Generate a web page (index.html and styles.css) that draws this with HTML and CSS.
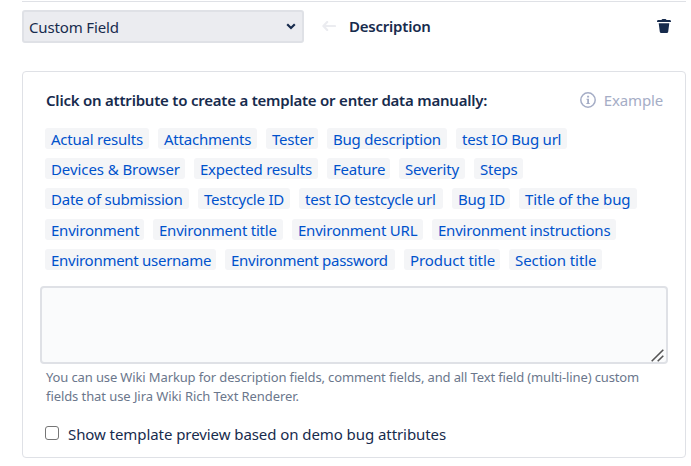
FILE: index.html
```html
<!DOCTYPE html>
<html lang="en">
<head>
<meta charset="utf-8">
<title>Custom field mapping</title>
<link rel="stylesheet" href="styles.css">
</head>
<body>
<main class="mapping">
  <header class="mapping-head">
    <div class="select"><span>Custom Field</span>
      <svg class="chevron" width="10" height="7" viewBox="0 0 10 7"><path d="M1.2 1.3 5 5 8.8 1.3" fill="none" stroke="#172b4d" stroke-width="2.2"/></svg>
    </div>
    <svg class="arrow" width="14" height="10" viewBox="0 0 14 10"><path d="M5.2 1 1.4 5l3.8 4M1.6 5H13" fill="none" stroke="#ebecf0" stroke-width="2.2" stroke-linecap="round" stroke-linejoin="round"/></svg>
    <strong class="field-name">Description</strong>
    <svg class="trash" width="14" height="14" viewBox="0 0 14 14"><path d="M0 2.4Q0 1 1.4 1H4.5Q4.8 0 5.8 0H8.2Q9.2 0 9.5 1h3.1Q14 1 14 2.4V3H0ZM1.7 4.2H12.3L11.2 12.8Q11 14 9.8 14H4.2Q3 14 2.8 12.8Z" fill="#172b4d"/></svg>
  </header>
  <section class="panel">
    <div class="panel-head">
      <strong class="prompt">Click on attribute to create a template or enter data manually:</strong>
      <span class="example"><svg width="16" height="16" viewBox="0 0 16 16"><circle cx="8" cy="8" r="7.2" fill="none" stroke="#a5adc6" stroke-width="1.5"/><path d="M7.1 3.8h2v1.8h-2zM6.5 6.7h2.5v4.2h.7v1.2H6.4v-1.2h.8V7.8h-.7z" fill="#a5adc6"/></svg><span class="example-text">Example</span></span>
    </div>
    <div class="chips">
      <div class="row row-1"><a>Actual results</a><a>Attachments</a><a>Tester</a><a>Bug description</a><a>test IO Bug url</a></div>
      <div class="row row-2"><a class="wide">Devices &amp; Browser</a><a>Expected results</a><a>Feature</a><a>Severity</a><a>Steps</a></div>
      <div class="row row-3"><a>Date of submission</a><a>Testcycle ID</a><a>test IO testcycle url</a><a>Bug ID</a><a class="wide">Title of the bug</a></div>
      <div class="row row-4"><a>Environment</a><a>Environment title</a><a>Environment URL</a><a>Environment instructions</a></div>
      <div class="row row-5"><a class="narrow">Environment username</a><a class="narrow">Environment password</a><a class="wide">Product title</a><a class="wide">Section title</a></div>
    </div>
    <div class="editor">
      <textarea class="template" aria-label="Template"></textarea>
      <svg class="grip" width="13" height="13" viewBox="0 0 13 13"><path d="M.7 12.3 12.3.7M6.7 12.3l5.6-5.6" stroke="#555" stroke-width="1.6"/></svg>
    </div>
    <p class="hint"><span class="hint-a">You can use Wiki Markup for description fields, comment fields, and all Text field (multi-line) custom</span><br><span class="hint-b">fields that use Jira Wiki Rich Text Renderer.</span></p>
    <label class="preview"><input type="checkbox"><span>Show template preview based on demo bug attributes</span></label>
  </section>
</main>
</body>
</html>
```
FILE: styles.css
```css
* { box-sizing: border-box; }
body { margin: 0; background: #fff; color: #172b4d; font: 15px/22px "Noto Sans", "Open Sans", sans-serif; }
.mapping { width: 664px; height: 459px; margin-left: 22px; padding-top: 1px; }
.mapping-head { display: flex; align-items: center; height: 50px; border-top: 1px solid #dfe1e6; }
.select { display: flex; align-items: center; justify-content: space-between; width: 282px; height: 33px; padding: 0 6px 0 5px; border: 2px solid #dfe1e6; border-radius: 3px; background: #ebecf0; letter-spacing: -.15px; }
.arrow { margin: -1px 0 0 18px; }
strong { font-weight: 600; letter-spacing: -.22px; }
.field-name { margin: -1px 0 0 13px; }
.trash { margin: -1px 15.5px 0 auto; }
.panel { height: 387px; margin-top: 20px; border: 1px solid #dfe1e6; border-radius: 4px; padding: 17px 18px 0 17px; }
.panel-head { display: flex; align-items: center; justify-content: space-between; height: 22px; padding: 0 4px 0 6px; }
.example { display: flex; align-items: center; gap: 8px; color: #a5adc6; letter-spacing: -.15px; }
.chips { display: flex; flex-direction: column; gap: 9.2px; margin: 17px 0 0 5px; }
.row { display: grid; column-gap: 9px; height: 21px; }
.row-1 { grid-template-columns: 104px 99px 52px 120px 111px; }
.row-2 { grid-template-columns: 140px 124px 63px 66px 49px; }
.row-3 { grid-template-columns: 144px 92px 144px 58px 118px; }
.row-4 { grid-template-columns: 99px 130px 131px 184px; }
.row-5 { grid-template-columns: 171px 170px 96px 93px; }
.row a { padding-left: 6px; line-height: 23px; height: 21px; border-radius: 3px; background: #f4f5f7; color: #0052cc; white-space: nowrap; letter-spacing: -.22px; }
.row .wide { letter-spacing: -.08px; }
.row .narrow { letter-spacing: -.28px; }
.editor { position: relative; height: 78px; margin-top: 16.2px; }
.template { display: block; width: 628px; height: 78px; border: 2px solid #dfe1e6; border-radius: 4px; background: #fafbfc; resize: none; }
.grip { position: absolute; right: 3px; bottom: 2px; }
.hint { margin: 4px 0 0 6px; color: #6b778c; font-size: 13px; line-height: 19px; white-space: nowrap; }
.hint-a { letter-spacing: -.13px; }
.hint-b { letter-spacing: -.08px; }
.preview { display: flex; align-items: center; gap: 9px; margin: 17px 0 0 5px; letter-spacing: -.07px; }
.preview input { appearance: none; width: 14px; height: 14px; margin: -2px 0 0; border: 1px solid #767676; border-radius: 3px; background: #fff; }
```
